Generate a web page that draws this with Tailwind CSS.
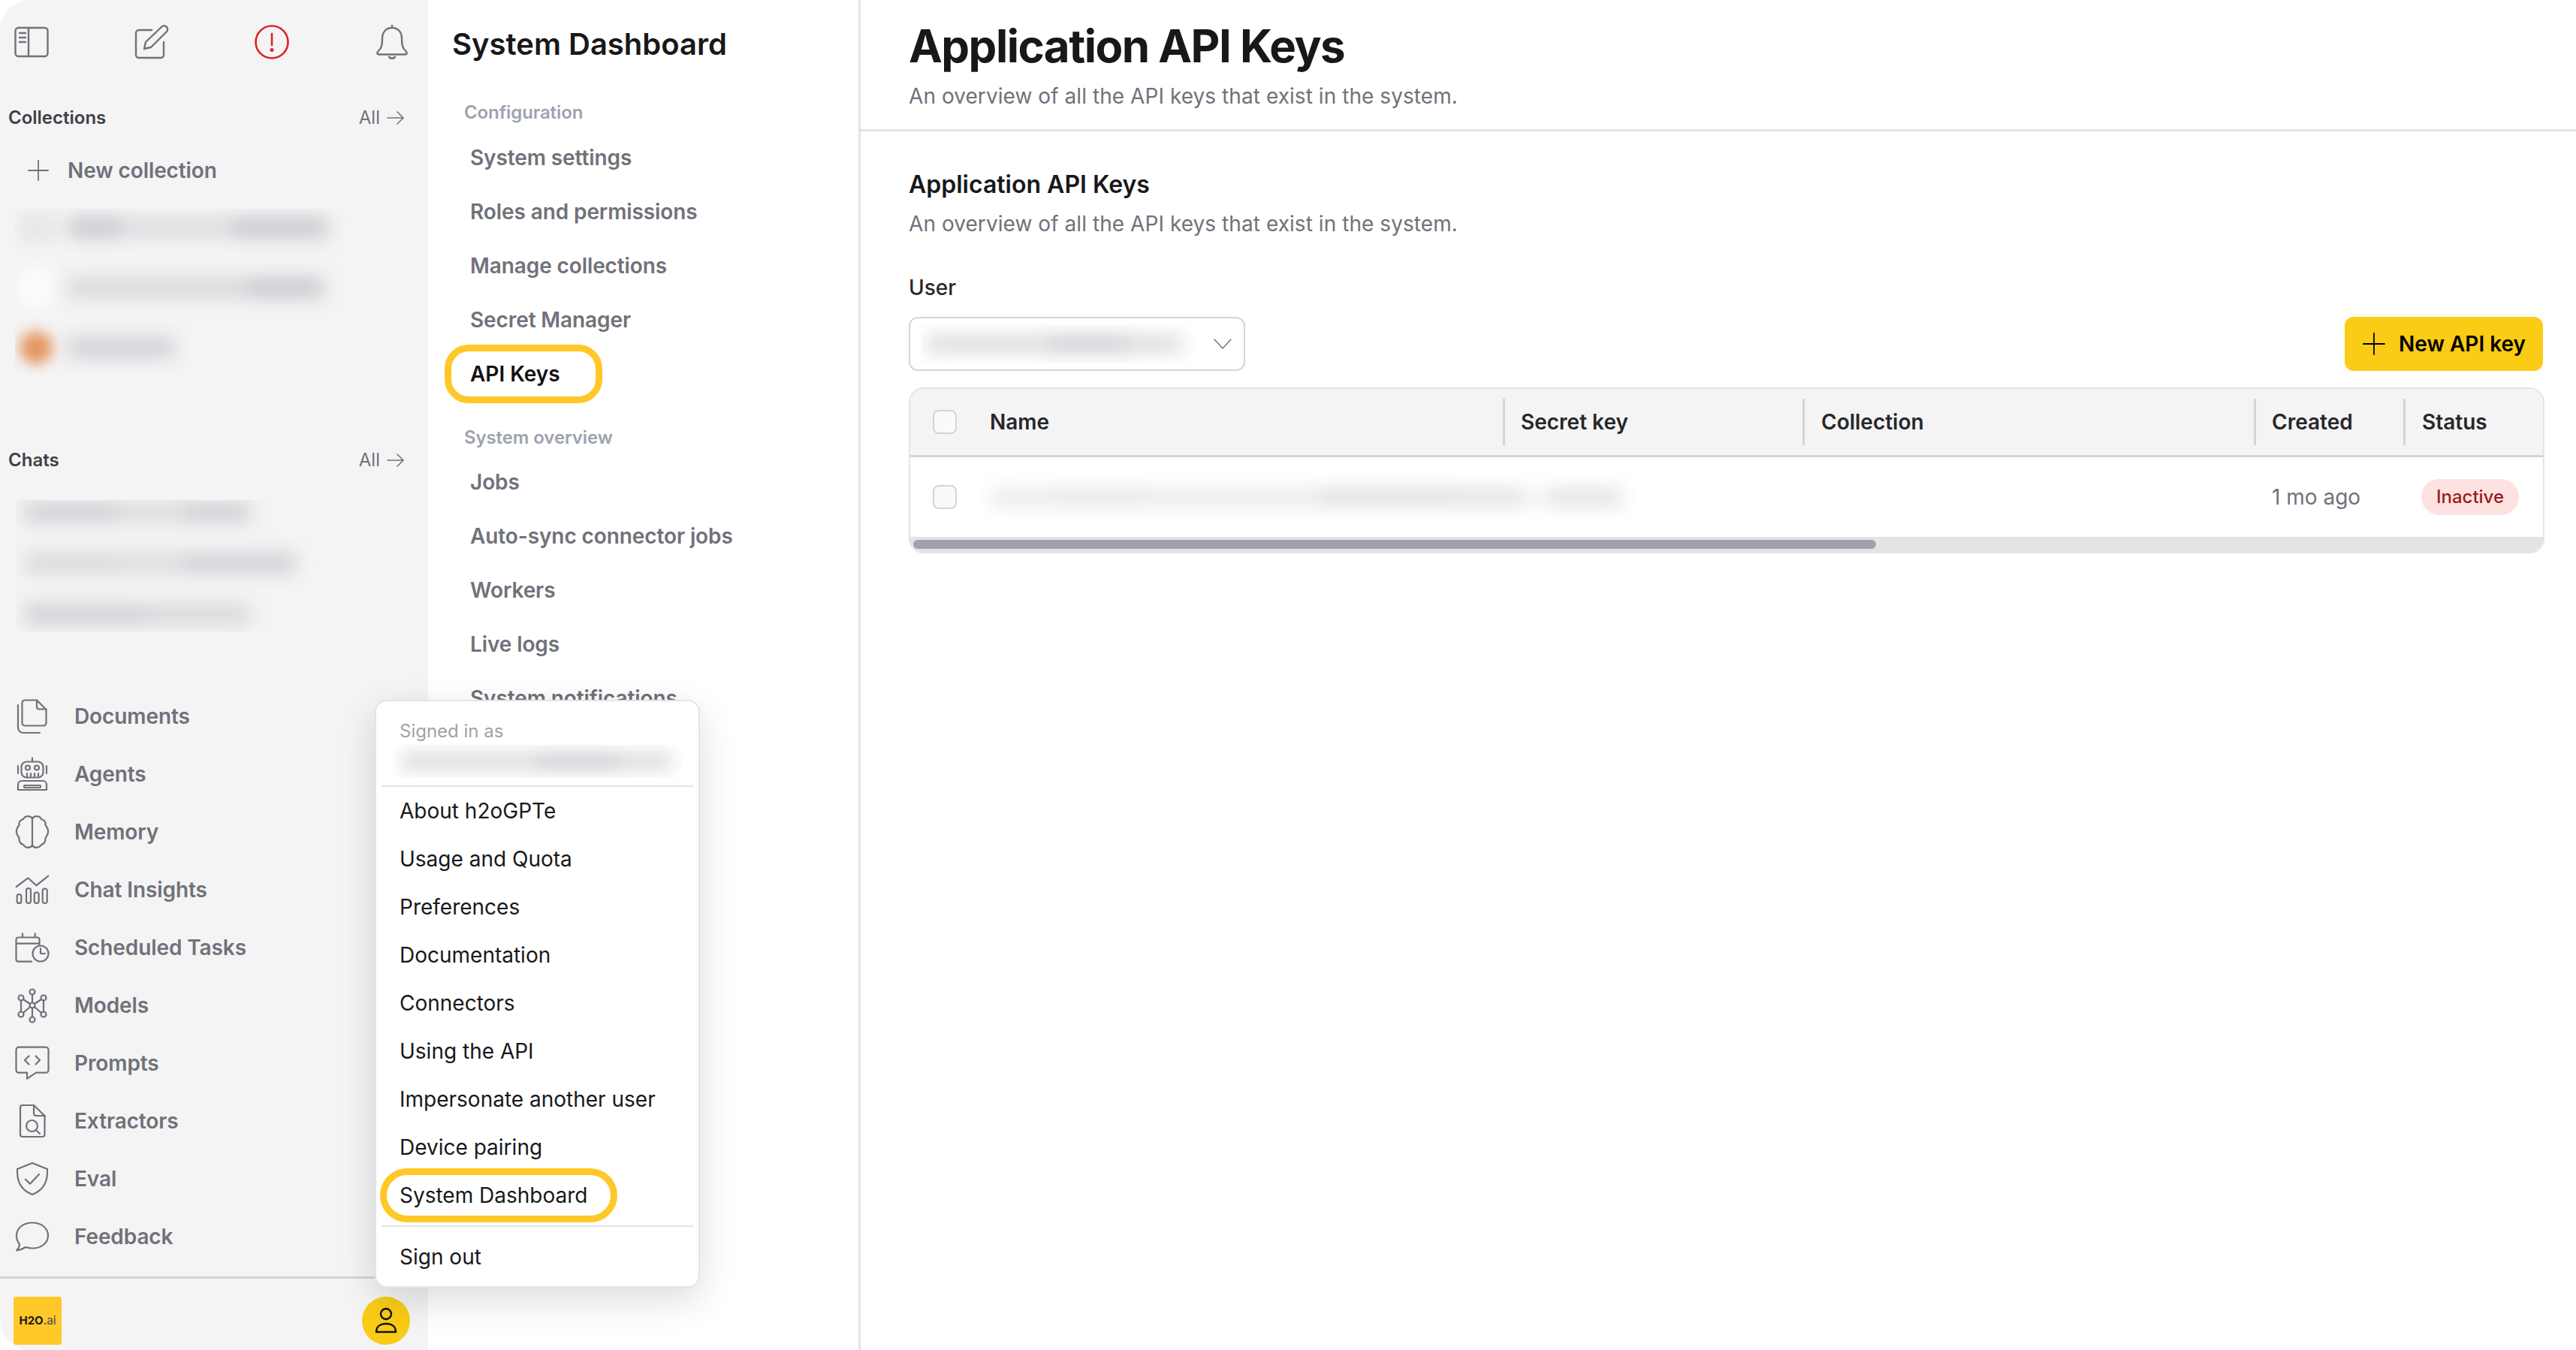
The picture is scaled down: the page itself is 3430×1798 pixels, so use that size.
<!DOCTYPE html>
<html lang="en">
<head>
<meta charset="utf-8">
<title>Application API Keys</title>
<script src="https://cdn.jsdelivr.net/npm/@tailwindcss/browser@4"></script>
</head>
<body class="bg-white">
<div class="relative flex w-[3430px] h-[1798px] overflow-hidden bg-white font-['Inter','Liberation_Sans',sans-serif]">

  <!-- Left sidebar -->
  <aside class="flex flex-col w-[570px] h-full shrink-0 bg-[#f4f4f5] rounded-l-[40px]">
    <div class="flex items-center justify-between h-[112px] pl-[18px] pr-[24px]">
      <svg class="w-[48px] h-[48px]" viewBox="0 0 48 48" fill="none" stroke="#71717a" stroke-width="2.4" stroke-linecap="round" stroke-linejoin="round"><rect x="2.5" y="5" width="43" height="38" rx="4"/><path d="M20 5v38M8 12h8M8 18h8M8 24h8"/></svg>
      <svg class="w-[48px] h-[48px]" viewBox="0 0 48 48" fill="none" stroke="#71717a" stroke-width="2.4" stroke-linecap="round" stroke-linejoin="round"><path d="M24 8H7a4 4 0 0 0-4 4v29a4 4 0 0 0 4 4h29a4 4 0 0 0 4-4V24"/><path d="M14 33l2-9L37 4a3.5 3.5 0 0 1 7 6L23 31z"/></svg>
      <svg class="w-[48px] h-[48px]" viewBox="0 0 48 48" fill="none" stroke="#e02424" stroke-width="2.6" stroke-linecap="round"><circle cx="24" cy="24" r="21.5"/><path d="M24 13v15"/><circle cx="24" cy="34.5" r="1.2" fill="#e02424"/></svg>
      <svg class="w-[48px] h-[48px]" viewBox="0 0 48 48" fill="none" stroke="#71717a" stroke-width="2.4" stroke-linecap="round" stroke-linejoin="round"><path d="M24 2v3M24 5c-8 0-13 6-13 14 0 11-2 14-6 18-1.500 1.500-.5 3.500 1.500 3.500h35c2 0 3-2 1.500-3.500-4-4-6-7-6-18C37 11 32 5 24 5z"/><path d="M20 43.500c1 3 7 3 8 0"/></svg>
    </div>

    <div class="flex items-center justify-between h-[90px] pl-[11px] pr-[31px]">
      <span class="text-[24px] font-semibold text-[#3f3f46]">Collections</span>
      <span class="flex items-center gap-[9px] text-[24px] text-[#71717a]">All
        <svg class="w-[24px] h-[24px]" viewBox="0 0 24 24" fill="none" stroke="#71717a" stroke-width="1.600" stroke-linecap="round" stroke-linejoin="round"><path d="M1 12h21M14 4l8 8-8 8"/></svg>
      </span>
    </div>
    <div class="flex items-center gap-[24px] h-[50px] pl-[36px]">
      <svg class="w-[30px] h-[30px]" viewBox="0 0 30 30" fill="none" stroke="#71717a" stroke-width="1.800" stroke-linecap="round"><path d="M15 2v26M2 15h26"/></svg>
      <span class="text-[28px] font-semibold tracking-[-0.1px] text-[#71717a]">New collection</span>
    </div>

    <div class="flex flex-col mt-[26px] ml-[20px] w-[450px] h-[219px] overflow-hidden">
      <div class="flex items-center gap-[16px] h-[50px] pl-[4px]">
        <div class="w-[50px] h-[44px] rounded-[10px] bg-[#e8e8ea] blur-[10px]"></div>
        <div class="flex blur-[12px]">
          <div class="w-[70px] h-[26px] bg-[#c8c8cd]"></div>
          <div class="w-[60px] h-[26px] bg-[#dcdce0]"></div>
          <div class="w-[90px] h-[26px] bg-[#dcdce0]"></div>
          <div class="w-[126px] h-[26px] bg-[#c8c8cd]"></div>
        </div>
      </div>
      <div class="flex items-center gap-[16px] h-[110px] pl-[4px]">
        <div class="w-[50px] h-[50px] rounded-[10px] bg-[#fcfcfc] blur-[10px]"></div>
        <div class="flex blur-[12px]">
          <div class="w-[125px] h-[26px] bg-[#d8d8dc]"></div>
          <div class="w-[115px] h-[26px] bg-[#d8d8dc]"></div>
          <div class="w-[100px] h-[26px] bg-[#c8c8cd]"></div>
        </div>
      </div>
      <div class="flex items-center gap-[20px] h-[50px] pl-[6px]">
        <div class="w-[44px] h-[44px] rounded-full bg-[#e59560] blur-[9px]"></div>
        <div class="w-[142px] h-[26px] bg-[#d0d0d5] blur-[12px]"></div>
      </div>
    </div>

    <div class="flex items-center justify-between h-[40px] mt-[96px] pl-[11px] pr-[31px]">
      <span class="text-[24px] font-semibold text-[#3f3f46]">Chats</span>
      <span class="flex items-center gap-[9px] text-[24px] text-[#71717a]">All
        <svg class="w-[24px] h-[24px]" viewBox="0 0 24 24" fill="none" stroke="#71717a" stroke-width="1.600" stroke-linecap="round" stroke-linejoin="round"><path d="M1 12h21M14 4l8 8-8 8"/></svg>
      </span>
    </div>

    <div class="flex flex-col gap-[42px] pt-[3px] mt-[33px] ml-[21px] w-[420px] h-[176px] overflow-hidden">
      <div class="flex ml-[12px] blur-[12px]">
        <div class="w-[120px] h-[26px] bg-[#d0d0d5]"></div>
        <div class="w-[90px] h-[26px] bg-[#dcdce0]"></div>
        <div class="w-[90px] h-[26px] bg-[#d0d0d5]"></div>
      </div>
      <div class="flex ml-[12px] blur-[12px]">
        <div class="w-[120px] h-[26px] bg-[#d8d8dc]"></div>
        <div class="w-[90px] h-[26px] bg-[#dcdce0]"></div>
        <div class="w-[150px] h-[26px] bg-[#d0d0d5]"></div>
      </div>
      <div class="flex ml-[12px] blur-[12px]">
        <div class="w-[160px] h-[26px] bg-[#d0d0d5]"></div>
        <div class="w-[140px] h-[26px] bg-[#d8d8dc]"></div>
      </div>
    </div>

    <nav class="flex flex-col mt-[73px] pl-[19px]">
      <a class="flex items-center gap-[32px] h-[77px] text-[28px] font-semibold tracking-[-0.1px] text-[#71717a]">
        <svg class="w-[48px] h-[48px]" viewBox="0 0 48 48" fill="none" stroke="#71717a" stroke-width="2.2" stroke-linecap="round" stroke-linejoin="round"><path d="M14 2.500h16l12.500 12.500v18a3.500 3.500 0 0 1-3.500 3.500H14a3.500 3.500 0 0 1-3.500-3.500V6A3.500 3.500 0 0 1 14 2.500z"/><path d="M30 2.500v9a3 3 0 0 0 3 3h9.500"/><path d="M5 9v30a7 7 0 0 0 7 7h22"/></svg>Documents</a>
      <a class="flex items-center gap-[32px] h-[77px] text-[28px] font-semibold tracking-[-0.1px] text-[#71717a]">
        <svg class="w-[48px] h-[48px]" viewBox="0 0 48 48" fill="none" stroke="#71717a" stroke-width="2.2" stroke-linecap="round" stroke-linejoin="round"><path d="M24 2.500v5"/><rect x="9.500" y="7.500" width="29" height="21" rx="7"/><circle cx="18" cy="15.500" r="3"/><circle cx="30" cy="15.500" r="3"/><path d="M17 23v4M22 23v4M27 23v4M32 23v4M5 13v10M43 13v10"/><path d="M10 33h28a5 5 0 0 1 5 5v7H5v-7a5 5 0 0 1 5-5z"/><rect x="13" y="39" width="22" height="3" rx="1"/></svg>Agents</a>
      <a class="flex items-center gap-[32px] h-[77px] text-[28px] font-semibold tracking-[-0.1px] text-[#71717a]">
        <svg class="w-[48px] h-[48px]" viewBox="0 0 48 48" fill="none" stroke="#71717a" stroke-width="2.2" stroke-linecap="round" stroke-linejoin="round"><path d="M24 6c-3-4-10-4-12 1-4 1-6 4-5.500 8C4 18 2.500 21 3 24c0 3 2 6 3.500 8-.5 4 1.500 8 5.500 9 3 5 9 5 12 1 3 4 9 4 12-1 4-1 6-5 5.500-9 1.500-2 3.500-5 3.500-8 .5-3-1-6-3.500-9 .5-4-1.500-7-5.500-8-2-5-9-5-12-1z"/><path d="M24 6v36"/></svg>Memory</a>
      <a class="flex items-center gap-[32px] h-[77px] text-[28px] font-semibold tracking-[-0.1px] text-[#71717a]">
        <svg class="w-[48px] h-[48px]" viewBox="0 0 48 48" fill="none" stroke="#71717a" stroke-width="2.2" stroke-linecap="round" stroke-linejoin="round"><path d="M2.700 20L18.300 8.300 29.300 18.300 45.300 5.700"/><rect x="3.700" y="30" width="5.600" height="12" rx="2.800"/><rect x="16" y="22" width="6" height="20" rx="3"/><rect x="26.700" y="27.500" width="6" height="14.500" rx="3"/><rect x="37.700" y="22.500" width="6" height="19.500" rx="3"/></svg>Chat Insights</a>
      <a class="flex items-center gap-[32px] h-[77px] text-[28px] font-semibold tracking-[-0.1px] text-[#71717a]">
        <svg class="w-[48px] h-[48px]" viewBox="0 0 48 48" fill="none" stroke="#71717a" stroke-width="2.2" stroke-linecap="round" stroke-linejoin="round"><path d="M23 42.700H5.500a3 3 0 0 1-3-3V13.500a3 3 0 0 1 3-3h25a3 3 0 0 1 3 3V20M2.500 18.700h31M11 5.300v5M27.700 5.300v5"/><circle cx="35" cy="32" r="10.500"/><path d="M35 25v7h6"/></svg>Scheduled Tasks</a>
      <a class="flex items-center gap-[32px] h-[77px] text-[28px] font-semibold tracking-[-0.1px] text-[#71717a]">
        <svg class="w-[48px] h-[48px]" viewBox="0 0 48 48" fill="none" stroke="#71717a" stroke-width="2.2" stroke-linecap="round" stroke-linejoin="round"><circle cx="24" cy="6" r="3.500"/><circle cx="9" cy="14" r="3.500"/><circle cx="39" cy="14" r="3.500"/><circle cx="24" cy="24" r="3.500"/><circle cx="9" cy="36" r="3.500"/><circle cx="39" cy="36" r="3.500"/><circle cx="24" cy="43" r="3.500"/><path d="M24 9.500v11M12 16l9 6M36 16l-9 6M12 34l9-8M36 34l-9-8M24 27.500v12M9 17.500v15M39 17.500v15"/></svg>Models</a>
      <a class="flex items-center gap-[32px] h-[77px] text-[28px] font-semibold tracking-[-0.1px] text-[#71717a]">
        <svg class="w-[48px] h-[48px]" viewBox="0 0 48 48" fill="none" stroke="#71717a" stroke-width="2.2" stroke-linecap="round" stroke-linejoin="round"><path d="M6 2.700h36a3.500 3.500 0 0 1 3.500 3.500v27a3.500 3.500 0 0 1-3.500 3.500H29l-12 8v-8H6a3.500 3.500 0 0 1-3.500-3.500v-27A3.500 3.500 0 0 1 6 2.700z"/><path d="M19.500 14.500L14 20l5.500 5.500M28.500 14.500L34 20l-5.500 5.500"/></svg>Prompts</a>
      <a class="flex items-center gap-[32px] h-[77px] text-[28px] font-semibold tracking-[-0.1px] text-[#71717a]">
        <svg class="w-[48px] h-[48px]" viewBox="0 0 48 48" fill="none" stroke="#71717a" stroke-width="2.2" stroke-linecap="round" stroke-linejoin="round"><path d="M11 3h15l14.500 14v25a3 3 0 0 1-3 3H11a3 3 0 0 1-3-3V6a3 3 0 0 1 3-3z"/><path d="M26 3v11a3 3 0 0 0 3 3h11.500"/><circle cx="23.500" cy="30.500" r="7.500"/><path d="M29 36l5 5"/></svg>Extractors</a>
      <a class="flex items-center gap-[32px] h-[77px] text-[28px] font-semibold tracking-[-0.1px] text-[#71717a]">
        <svg class="w-[48px] h-[48px]" viewBox="0 0 48 48" fill="none" stroke="#71717a" stroke-width="2.2" stroke-linecap="round" stroke-linejoin="round"><path d="M24 3l20 8c.5 15-3 27-20 34C7 38 3.500 26 4 11z"/><path d="M15 24.700l6 6L33 18"/></svg>Eval</a>
      <a class="flex items-center gap-[32px] h-[77px] text-[28px] font-semibold tracking-[-0.1px] text-[#71717a]">
        <svg class="w-[48px] h-[48px]" viewBox="0 0 48 48" fill="none" stroke="#71717a" stroke-width="2.2" stroke-linecap="round" stroke-linejoin="round"><path d="M24 5.500c12 0 21 7 21 17s-9 17-21 17c-3.500 0-6-.5-9-1.500-3 2-7 4-12 4.500 2.500-2.500 4-5 4-8.500-2.500-3-4-7-4-11.500 0-10 9-17 21-17z"/></svg>Feedback</a>
    </nav>

    <footer class="flex items-start justify-between h-[98px] mt-auto pt-[24px] pl-[18px] pr-[24px] border-t-[3px] border-[#d4d4d8]">
      <div class="flex items-center justify-center w-[64px] h-[64px] rounded-[3px] bg-[#ffc828] text-[15px] font-bold text-[#18181b]">H2O<span class="font-medium text-[#52525b]">.ai</span></div>
      <div class="flex items-center justify-center w-[64px] h-[64px] rounded-full bg-[#facc15]">
        <svg class="w-[32px] h-[36px]" viewBox="0 0 32 36" fill="none" stroke="#111" stroke-width="2.400" stroke-linecap="round" stroke-linejoin="round"><circle cx="16" cy="9" r="7"/><path d="M3 33c0-7 5-11 13-11s13 4 13 11z"/></svg>
      </div>
    </footer>
  </aside>

  <!-- Dashboard navigation -->
  <section class="w-[576px] h-full shrink-0 border-r-[3px] border-[#e4e4e7] overflow-hidden">
    <h2 class="flex items-center h-[118px] pl-[32px] text-[40px] font-semibold text-[#18181b]">System Dashboard</h2>
    <div class="h-[56px] pt-[17px] pl-[48px] text-[24px] leading-[30px] font-semibold tracking-[-0.1px] text-[#9ca3af]">Configuration</div>
    <a class="flex items-center h-[72px] pl-[56px] text-[28px] font-semibold tracking-[-0.1px] text-[#71717a]">System settings</a>
    <a class="flex items-center h-[72px] pl-[56px] text-[28px] font-semibold tracking-[-0.1px] text-[#71717a]">Roles and permissions</a>
    <a class="flex items-center h-[72px] pl-[56px] text-[28px] font-semibold tracking-[-0.1px] text-[#71717a]">Manage collections</a>
    <a class="flex items-center h-[72px] pl-[56px] text-[28px] font-semibold tracking-[-0.1px] text-[#71717a]">Secret Manager</a>
    <a class="relative flex items-center h-[72px] pl-[56px] text-[28px] font-semibold text-[#111]">API Keys
      <span class="absolute left-[22px] top-[-3px] w-[210px] h-[78px] rounded-[32px] border-[9px] border-[#ffc828]"></span>
    </a>
    <div class="h-[72px] pt-[34px] pl-[48px] text-[24px] leading-[30px] font-semibold tracking-[-0.1px] text-[#9ca3af]">System overview</div>
    <a class="flex items-center h-[72px] pl-[56px] text-[28px] font-semibold tracking-[-0.1px] text-[#71717a]">Jobs</a>
    <a class="flex items-center h-[72px] pl-[56px] text-[28px] font-semibold tracking-[-0.1px] text-[#71717a]">Auto-sync connector jobs</a>
    <a class="flex items-center h-[72px] pl-[56px] text-[28px] font-semibold tracking-[-0.1px] text-[#71717a]">Workers</a>
    <a class="flex items-center h-[72px] pl-[56px] text-[28px] font-semibold tracking-[-0.1px] text-[#71717a]">Live logs</a>
    <a class="flex items-center h-[72px] pl-[56px] text-[28px] font-semibold tracking-[-0.1px] text-[#71717a]">System notifications</a>
  </section>

  <!-- Main -->
  <main class="flex-1 min-w-0">
    <header class="h-[175px] pt-[25px] pl-[64px] border-b-[3px] border-[#e4e4e7]">
      <h1 class="text-[60px] leading-[72px] font-bold tracking-[-1.500px] text-[#18181b]">Application API Keys</h1>
      <p class="mt-[11px] text-[28px] leading-[40px] tracking-[0.06px] text-[#71717a]">An overview of all the API keys that exist in the system.</p>
    </header>
    <div class="pt-[49px] pl-[64px] pr-[42px]">
      <h3 class="text-[32px] leading-[44px] font-semibold text-[#18181b]">Application API Keys</h3>
      <p class="mt-[10px] text-[28px] leading-[40px] tracking-[0.06px] text-[#71717a]">An overview of all the API keys that exist in the system.</p>
      <label class="block mt-[45px] text-[28px] leading-[40px] font-medium text-[#27272a]">User</label>
      <div class="flex items-center justify-between mt-[19px]">
        <div class="flex items-center justify-between w-[448px] h-[72px] pl-[14px] pr-[16px] rounded-[12px] border-2 border-[#d4d4d8]">
          <div class="w-[366px] h-[52px] overflow-hidden flex items-center"><div class="flex ml-[8px] blur-[12px]"><div class="w-[160px] h-[24px] bg-[#dcdce0]"></div><div class="w-[110px] h-[24px] bg-[#cfcfd4]"></div><div class="w-[70px] h-[24px] bg-[#dcdce0]"></div></div></div>
          <svg class="w-[24px] h-[14px]" viewBox="0 0 24 14" fill="none" stroke="#71717a" stroke-width="1.400" stroke-linecap="round" stroke-linejoin="round"><path d="M1 1l11 12L23 1"/></svg>
        </div>
        <button class="flex items-center gap-[18px] w-[264px] h-[72px] mr-[2px] pl-[24px] rounded-[12px] bg-[#facc15] text-[28px] font-semibold text-black">
          <svg class="w-[30px] h-[30px]" viewBox="0 0 30 30" fill="none" stroke="#000" stroke-width="1.800" stroke-linecap="round"><path d="M15 1v28M1 15h28"/></svg>New API key
        </button>
      </div>

      <div class="mt-[22px] rounded-[20px] border-2 border-[#e4e4e7] overflow-hidden">
        <div class="grid grid-cols-[94px_695px_399px_601px_199px_1fr] items-center h-[91px] bg-[#f4f4f5] border-b-[3px] border-[#d4d4d8] text-[28px] font-semibold text-[#27272a]">
          <div class="pl-[30px]"><div class="w-[32px] h-[32px] rounded-[8px] border-2 border-[#d4d4d8] bg-[#fafafa]"></div></div>
          <div class="pl-[12px]">Name</div>
          <div class="flex items-center h-[62px] pl-[21px] border-l-[3px] border-[#d4d4d8]">Secret key</div>
          <div class="flex items-center h-[62px] pl-[22px] border-l-[3px] border-[#d4d4d8]">Collection</div>
          <div class="flex items-center h-[62px] pl-[21px] border-l-[3px] border-[#d4d4d8]">Created</div>
          <div class="flex items-center h-[62px] pl-[22px] border-l-[3px] border-[#d4d4d8]">Status</div>
        </div>
        <div class="grid grid-cols-[94px_695px_399px_601px_199px_1fr] items-center h-[106px] text-[28px]">
          <div class="pl-[30px]"><div class="w-[32px] h-[32px] rounded-[8px] border-2 border-[#d4d4d8] bg-[#fafafa]"></div></div>
          <div class="col-span-2 w-[872px] h-[66px] overflow-hidden flex items-center">
            <div class="flex ml-[14px] blur-[12px]">
              <div class="w-[90px] h-[22px] bg-[#e8e8ea]"></div>
              <div class="w-[110px] h-[22px] bg-[#e4e4e7]"></div>
              <div class="w-[240px] h-[22px] bg-[#e8e8ea]"></div>
              <div class="w-[170px] h-[22px] bg-[#dcdce0]"></div>
              <div class="w-[100px] h-[22px] bg-[#e0e0e3]"></div>
              <div class="w-[30px] h-[22px] bg-[#f4f4f5]"></div>
              <div class="w-[100px] h-[22px] bg-[#e0e0e3]"></div>
            </div>
          </div>
          <div></div>
          <div class="pl-[24px] text-[#71717a]">1 mo ago</div>
          <div class="pl-[24px]"><span class="inline-flex items-center justify-center w-[130px] h-[48px] rounded-full bg-[#fee2e2] text-[24px] font-medium text-[#991b1b]">Inactive</span></div>
        </div>
        <div class="flex items-center h-[20px] pl-[4px] bg-[#e4e4e7]">
          <div class="w-[1282px] h-[12px] rounded-full bg-[#a1a1aa]"></div>
        </div>
      </div>
    </div>
  </main>

  <!-- User menu -->
  <div class="absolute left-[499px] top-[932px] w-[433px] h-[783px] rounded-[16px] border-2 border-[#e4e4e7] bg-white shadow-[0_16px_50px_rgba(0,0,0,0.14)]">
    <div class="pt-[24px] pl-[31px] text-[24px] leading-[32px] text-[#a1a1aa]">Signed in as</div>
    <div class="flex items-center ml-[23px] mt-[2px] w-[384px] h-[44px] overflow-hidden"><div class="flex ml-[10px] blur-[12px]"><div class="w-[180px] h-[24px] bg-[#dcdce0]"></div><div class="w-[110px] h-[24px] bg-[#cfcfd4]"></div><div class="w-[70px] h-[24px] bg-[#dcdce0]"></div></div></div>
    <div class="mx-[7px] mt-[10px] h-[2px] bg-[#e4e4e7]"></div>
    <a class="flex items-center h-[64px] pl-[31px] text-[28px] text-[#18181b]">About h2oGPTe</a>
    <a class="flex items-center h-[64px] pl-[31px] text-[28px] text-[#18181b]">Usage and Quota</a>
    <a class="flex items-center h-[64px] pl-[31px] text-[28px] text-[#18181b]">Preferences</a>
    <a class="flex items-center h-[64px] pl-[31px] text-[28px] text-[#18181b]">Documentation</a>
    <a class="flex items-center h-[64px] pl-[31px] text-[28px] text-[#18181b]">Connectors</a>
    <a class="flex items-center h-[64px] pl-[31px] text-[28px] text-[#18181b]">Using the API</a>
    <a class="flex items-center h-[64px] pl-[31px] text-[28px] text-[#18181b]">Impersonate another user</a>
    <a class="flex items-center h-[64px] pl-[31px] text-[28px] text-[#18181b]">Device pairing</a>
    <a class="relative flex items-center h-[64px] pl-[31px] text-[28px] text-[#18181b]">System Dashboard
      <span class="absolute left-[5px] top-[-4px] w-[316px] h-[72px] rounded-full border-[9px] border-[#ffc828]"></span>
    </a>
    <div class="mx-[7px] mt-[8px] h-[2px] bg-[#e4e4e7]"></div>
    <a class="flex items-center h-[64px] mt-[8px] pl-[31px] text-[28px] text-[#18181b]">Sign out</a>
  </div>
</div>
</body>
</html>
